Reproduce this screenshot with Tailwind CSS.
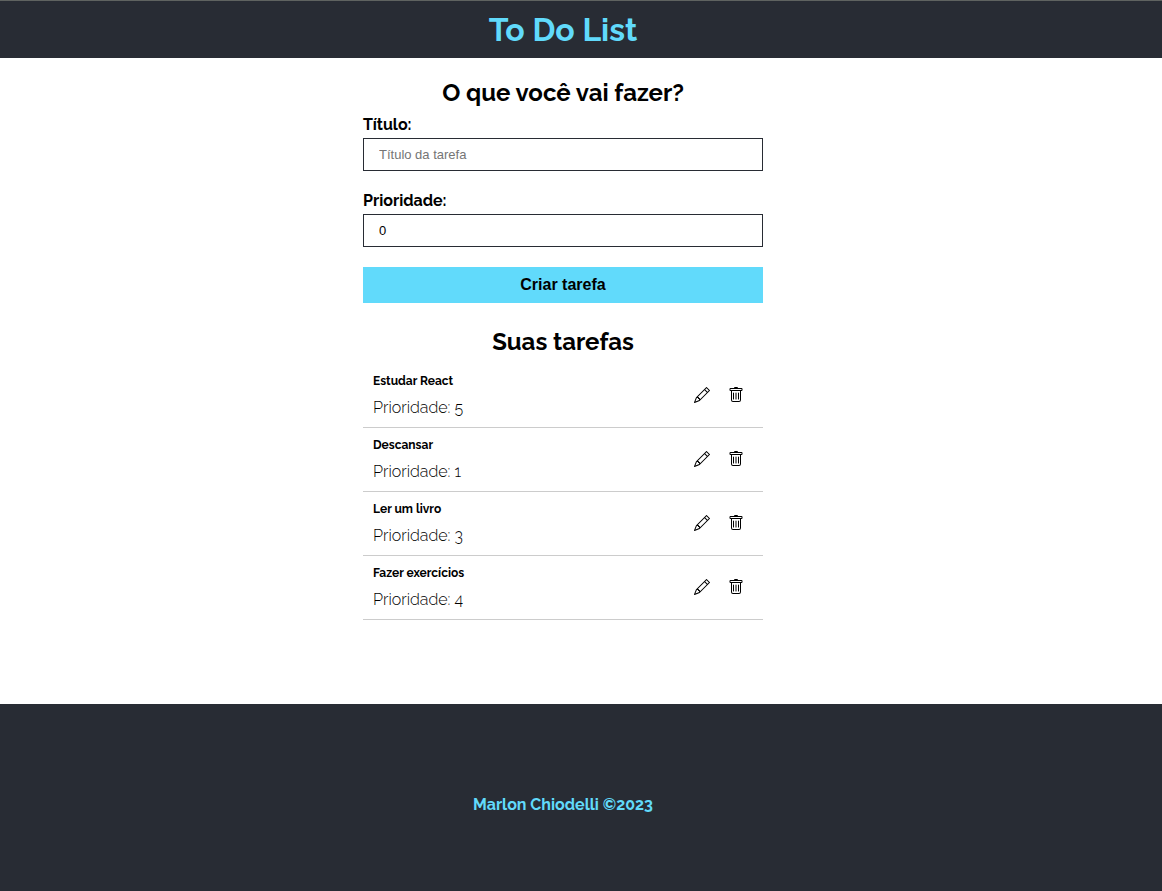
<!DOCTYPE html>
<html lang="pt-BR">
<head>
<meta charset="utf-8">
<meta name="viewport" content="width=device-width, initial-scale=1">
<title>To Do List</title>
<script src="https://cdn.jsdelivr.net/npm/@tailwindcss/browser@4"></script>
</head>
<body class="flex min-h-screen flex-col bg-white font-[Raleway,Lato,sans-serif] text-black">
<svg class="hidden" aria-hidden="true">
  <symbol id="pencil" viewBox="0 0 16 16"><path d="M12.146.146a.5.5 0 0 1 .708 0l3 3a.5.5 0 0 1 0 .708l-10 10a.5.5 0 0 1-.168.11l-5 2a.5.5 0 0 1-.65-.65l2-5a.5.5 0 0 1 .11-.168l10-10zM11.207 2.5 13.5 4.793 14.793 3.5 12.5 1.207 11.207 2.5zm1.586 3L10.5 3.207 4 9.707V10h.5a.5.5 0 0 1 .5.5v.5h.5a.5.5 0 0 1 .5.5v.5h.293l6.5-6.5zm-9.761 5.175-.106.106-1.528 3.821 3.821-1.528.106-.106A.5.5 0 0 1 5 12.5V12h-.5a.5.5 0 0 1-.5-.5V11h-.5a.5.5 0 0 1-.468-.325z"/></symbol>
  <symbol id="trash" viewBox="0 0 16 16"><path d="M5.5 5.5A.5.5 0 0 1 6 6v6a.5.5 0 0 1-1 0V6a.5.5 0 0 1 .5-.5zm2.5 0a.5.5 0 0 1 .5.5v6a.5.5 0 0 1-1 0V6a.5.5 0 0 1 .5-.5zm3 .5a.5.5 0 0 0-1 0v6a.5.5 0 0 0 1 0V6z"/><path fill-rule="evenodd" d="M14.5 3a1 1 0 0 1-1 1H13v9a2 2 0 0 1-2 2H5a2 2 0 0 1-2-2V4h-.5a1 1 0 0 1-1-1V2a1 1 0 0 1 1-1H6a1 1 0 0 1 1-1h2a1 1 0 0 1 1 1h3.5a1 1 0 0 1 1 1v1zM4.118 4 4 4.059V13a1 1 0 0 0 1 1h6a1 1 0 0 0 1-1V4.059L11.882 4H4.118zM2.5 3V2h11v1h-11z"/></symbol>
</svg>
<header class="border-t border-[#5f6360] bg-[#282c34] pt-[9px] pr-9 pb-2 text-center">
  <h1 class="text-[32px] leading-10 font-bold text-[#61dafb]">To Do List</h1>
</header>
<main class="grow pt-5 pr-9 pb-[84px]">
  <div class="mx-auto max-w-[400px]">
    <h2 class="mb-1.5 text-center text-2xl leading-[30px] font-bold">O que você vai fazer?</h2>
    <form>
      <label for="title" class="mb-0.5 block text-base leading-[22px] font-bold">Título:</label>
      <input id="title" type="text" placeholder="Título da tarefa" class="mb-[19px] block h-[33px] w-full border border-[#282c34] px-[15px] font-['Liberation_Sans',Arial,sans-serif] text-[13px] placeholder:text-[#757575]">
      <label for="priority" class="mb-0.5 block text-base leading-[22px] font-bold">Prioridade:</label>
      <input id="priority" type="text" inputmode="numeric" value="0" class="mb-5 block h-[33px] w-full border border-[#282c34] px-[15px] font-['Liberation_Sans',Arial,sans-serif] text-[13px]">
      <button type="submit" class="block h-9 w-full bg-[#61dafb] font-['Liberation_Sans',Arial,sans-serif] text-base font-bold">Criar tarefa</button>
    </form>
    <h2 class="mt-6 mb-[7px] text-center text-2xl leading-[30px] font-bold">Suas tarefas</h2>
    <ul>
      <li class="flex items-center justify-between border-b border-[#ccc] py-2 pr-[19px] pl-[10px]">
        <div class="flex flex-col gap-1.5">
          <h3 class="text-xs leading-[18px] font-bold">Estudar React</h3>
          <p class="text-base leading-[23px] font-light">Prioridade: 5</p>
        </div>
        <div class="flex gap-[18px] pb-0.5">
          <button type="button" aria-label="Editar Estudar React"><svg class="size-4 fill-current"><use href="#pencil"/></svg></button>
          <button type="button" aria-label="Excluir Estudar React"><svg class="size-4 fill-current"><use href="#trash"/></svg></button>
        </div>
      </li>
      <li class="flex items-center justify-between border-b border-[#ccc] py-2 pr-[19px] pl-[10px]">
        <div class="flex flex-col gap-1.5">
          <h3 class="text-xs leading-[18px] font-bold">Descansar</h3>
          <p class="text-base leading-[23px] font-light">Prioridade: 1</p>
        </div>
        <div class="flex gap-[18px] pb-0.5">
          <button type="button" aria-label="Editar Descansar"><svg class="size-4 fill-current"><use href="#pencil"/></svg></button>
          <button type="button" aria-label="Excluir Descansar"><svg class="size-4 fill-current"><use href="#trash"/></svg></button>
        </div>
      </li>
      <li class="flex items-center justify-between border-b border-[#ccc] py-2 pr-[19px] pl-[10px]">
        <div class="flex flex-col gap-1.5">
          <h3 class="text-xs leading-[18px] font-bold">Ler um livro</h3>
          <p class="text-base leading-[23px] font-light">Prioridade: 3</p>
        </div>
        <div class="flex gap-[18px] pb-0.5">
          <button type="button" aria-label="Editar Ler um livro"><svg class="size-4 fill-current"><use href="#pencil"/></svg></button>
          <button type="button" aria-label="Excluir Ler um livro"><svg class="size-4 fill-current"><use href="#trash"/></svg></button>
        </div>
      </li>
      <li class="flex items-center justify-between border-b border-[#ccc] py-2 pr-[19px] pl-[10px]">
        <div class="flex flex-col gap-1.5">
          <h3 class="text-xs leading-[18px] font-bold">Fazer exercícios</h3>
          <p class="text-base leading-[23px] font-light">Prioridade: 4</p>
        </div>
        <div class="flex gap-[18px] pb-0.5">
          <button type="button" aria-label="Editar Fazer exercícios"><svg class="size-4 fill-current"><use href="#pencil"/></svg></button>
          <button type="button" aria-label="Excluir Fazer exercícios"><svg class="size-4 fill-current"><use href="#trash"/></svg></button>
        </div>
      </li>
    </ul>
  </div>
</main>
<footer class="bg-[#282c34] pt-[89px] pr-9 pb-[74px] text-center">
  <p class="text-base leading-6 font-bold text-[#61dafb]">Marlon Chiodelli ©2023</p>
</footer>
</body>
</html>
